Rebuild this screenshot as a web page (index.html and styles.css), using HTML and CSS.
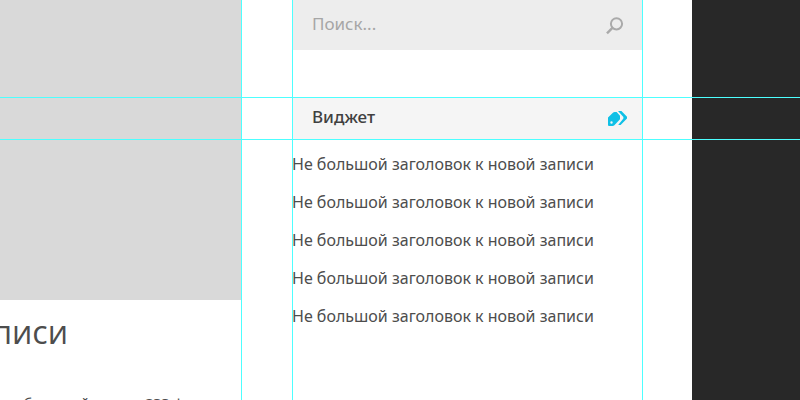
FILE: index.html
```html
<!DOCTYPE html>
<html lang="ru">
<head>
    <meta charset="UTF-8">
    <meta name="viewport" content="width=device-width, initial-scale=1.0">
    <title>Блог</title>
    <link rel="stylesheet" href="styles.css">
</head>
<body>
    <div class="page">
        <main class="post">
            <div class="post-image"></div>
            <h1 class="post-title">писи</h1>
            <p class="post-text">не большой текста CSS ф</p>
            <span class="guide guide-right"></span>
        </main>

        <aside class="sidebar">
            <form class="search">
                <input type="text" class="search-input" placeholder="Поиск..." aria-label="Поиск">
                <button type="button" class="search-btn" aria-label="Найти">
                    <svg width="18" height="18" viewBox="0 0 18 18" fill="none" stroke="#aaaaaa" stroke-width="2">
                        <circle cx="10.5" cy="6.8" r="5.6"/>
                        <path d="M6.4 10.8L1 16.3" stroke-width="2.4"/>
                    </svg>
                </button>
            </form>

            <section class="widget">
                <header class="widget-header">
                    <h2>Виджет</h2>
                    <svg width="19" height="15" viewBox="0 0 19 15" fill="#0fc0e6">
                        <path fill-rule="evenodd" d="M0 6.4L5.2 1.6Q5.8 1 6.6 1H8.6L12 4.8V8.2L6.4 14.2Q5.6 15 4.6 15H1Q0 15 0 14ZM3.5 10.3A1.2 1.2 0 1 0 3.5 12.7A1.2 1.2 0 1 0 3.5 10.3Z"/>
                        <path d="M10 0H13.4L19 5.8V7.4L12.6 14H10.2L15.4 7.6V6Z"/>
                    </svg>
                </header>
                <ul class="widget-list">
                    <li><a href="#">Не большой заголовок к новой записи</a></li>
                    <li><a href="#">Не большой заголовок к новой записи</a></li>
                    <li><a href="#">Не большой заголовок к новой записи</a></li>
                    <li><a href="#">Не большой заголовок к новой записи</a></li>
                    <li><a href="#">Не большой заголовок к новой записи</a></li>
                </ul>
            </section>
            <span class="guide guide-left"></span>
            <span class="guide guide-right"></span>
        </aside>

        <div class="backdrop"></div>
        <span class="guide guide-top"></span>
        <span class="guide guide-bottom"></span>
    </div>
</body>
</html>
```
FILE: styles.css
```css
* {
    box-sizing: border-box;
}
body {
    margin: 0;
    font-family: "Noto Sans", "Open Sans", sans-serif;
    background: #ffffff;
    color: #4d4d4d;
}
.page {
    position: relative;
    display: flex;
    height: 100vh;
    overflow: hidden;
}

/* Post */
.post {
    position: relative;
    flex: 1;
    min-width: 0;
}
.post-image {
    height: 300px;
    background: #d9d9d9;
}
.post-title {
    display: flex;
    justify-content: flex-end;
    margin: 10px 0 0;
    padding-right: 174px;
    font-family: "Open Sans", sans-serif;
    font-size: 32px;
    line-height: 44px;
    font-weight: 400;
}
.post-text {
    margin: 39px 0 0;
    padding-left: 2px;
    font-size: 15px;
    line-height: 20px;
    white-space: nowrap;
}

/* Sidebar */
.sidebar {
    position: relative;
    flex: 0 0 351px;
    margin: 0 49px 0 50px;
}
.search {
    display: flex;
    align-items: center;
    height: 50px;
    padding: 0 19px 0 20px;
    background: #ededed;
}
.search-input {
    flex: 1;
    min-width: 0;
    padding: 0 0 4px;
    border: none;
    background: none;
    font-family: inherit;
    font-size: 17px;
    color: #4d4d4d;
}
.search-input::placeholder {
    color: #a6a6a6;
}
.search-btn {
    display: flex;
    padding: 2px 0 0;
    border: none;
    background: none;
    cursor: pointer;
}
.widget {
    margin-top: 47px;
}
.widget-header {
    display: flex;
    justify-content: space-between;
    align-items: center;
    height: 43px;
    padding: 0 16px 0 20px;
    background: #f5f5f5;
}
.widget-header h2 {
    margin: 0;
    padding-bottom: 4px;
    font-size: 17px;
    font-weight: 500;
    color: #404040;
}
.widget-list {
    margin: 0;
    padding: 5px 0 0;
    list-style: none;
}
.widget-list a {
    display: block;
    font-size: 16px;
    line-height: 38px;
    color: #4d4d4d;
    text-decoration: none;
    white-space: nowrap;
}

.backdrop {
    flex: 0 0 108px;
    background: #282828;
}

/* Guide lines over the layout */
.guide {
    position: absolute;
    background: #4dffff;
}
.guide-left,
.guide-right {
    top: 0;
    bottom: 0;
    width: 1px;
}
.guide-left {
    left: 0;
}
.guide-right {
    right: 0;
}
.guide-top,
.guide-bottom {
    left: 0;
    right: 0;
    height: 1px;
}
.guide-top {
    top: 97px;
}
.guide-bottom {
    top: 139px;
}
```
